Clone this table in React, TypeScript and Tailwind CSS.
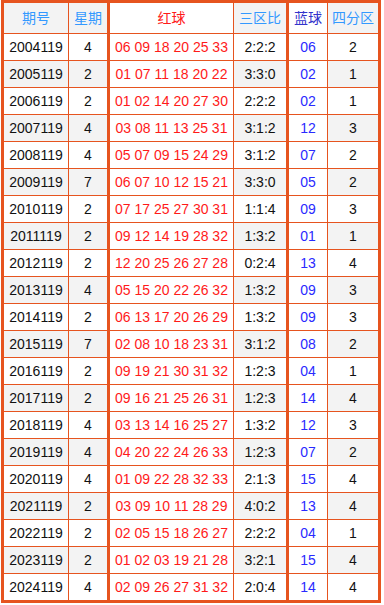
const rows: [string, string, string, string, string, string][] = [
  ["2004119", "4", "06 09 18 20 25 33", "2:2:2", "06", "2"],
  ["2005119", "2", "01 07 11 18 20 22", "3:3:0", "02", "1"],
  ["2006119", "2", "01 02 14 20 27 30", "2:2:2", "02", "1"],
  ["2007119", "4", "03 08 11 13 25 31", "3:1:2", "12", "3"],
  ["2008119", "4", "05 07 09 15 24 29", "3:1:2", "07", "2"],
  ["2009119", "7", "06 07 10 12 15 21", "3:3:0", "05", "2"],
  ["2010119", "2", "07 17 25 27 30 31", "1:1:4", "09", "3"],
  ["2011119", "2", "09 12 14 19 28 32", "1:3:2", "01", "1"],
  ["2012119", "2", "12 20 25 26 27 28", "0:2:4", "13", "4"],
  ["2013119", "4", "05 15 20 22 26 32", "1:3:2", "09", "3"],
  ["2014119", "2", "06 13 17 20 26 29", "1:3:2", "09", "3"],
  ["2015119", "7", "02 08 10 18 23 31", "3:1:2", "08", "2"],
  ["2016119", "2", "09 19 21 30 31 32", "1:2:3", "04", "1"],
  ["2017119", "2", "09 16 21 25 26 31", "1:2:3", "14", "4"],
  ["2018119", "4", "03 13 14 16 25 27", "1:3:2", "12", "3"],
  ["2019119", "4", "04 20 22 24 26 33", "1:2:3", "07", "2"],
  ["2020119", "4", "01 09 22 28 32 33", "2:1:3", "15", "4"],
  ["2021119", "2", "03 09 10 11 28 29", "4:0:2", "13", "4"],
  ["2022119", "2", "02 05 15 18 26 27", "2:2:2", "04", "1"],
  ["2023119", "2", "01 02 03 19 21 28", "3:2:1", "15", "4"],
  ["2024119", "4", "02 09 26 27 31 32", "2:0:4", "14", "4"],
];

const cell = "flex items-center justify-center";

export default function App() {
  return (
    <div className="bg-white w-[384px] h-[605px] font-['Liberation_Sans','Noto_Sans_CJK_SC',sans-serif] text-[14px]">
      <div className="ml-px w-[380px] border-[3px] border-[#e6541f]">
        <div className="flex h-[31px] border-b border-[#e6541f]">
          <div className={`${cell} w-[64px] bg-[#f3f3f3] text-[#3399ff]`}>期号</div>
          <div className={`${cell} w-[39px] border-l border-[#e6541f] bg-[#f3f3f3] text-[#3399ff]`}>星期</div>
          <div className={`${cell} w-[126px] border-l-[3px] border-[#e6541f] bg-white text-[#ff1a1a]`}>红球</div>
          <div className={`${cell} w-[53px] border-l border-[#e6541f] bg-[#f3f3f3] text-[#3399ff]`}>三区比</div>
          <div className={`${cell} w-[41px] border-l-[3px] border-[#e6541f] bg-white text-[#3333cc]`}>蓝球</div>
          <div className={`${cell} w-[51px] border-l border-[#e6541f] bg-[#f3f3f3] text-[#3399ff]`}>四分区</div>
        </div>
        {rows.map((r, i) => {
          const shade = i % 2 === 1 ? "bg-[#f3f3f3]" : "bg-white";
          const last = i === rows.length - 1;
          return (
            <div key={r[0]} className={`flex text-[#111] ${last ? "h-[26px]" : "h-[27px] border-b border-[#e6541f]"}`}>
              <div className={`${cell} w-[64px] ${shade}`}>{r[0]}</div>
              <div className={`${cell} w-[39px] border-l border-[#e6541f] ${shade}`}>{r[1]}</div>
              <div className={`${cell} w-[126px] border-l-[3px] border-[#e6541f] bg-white text-[#ff1a1a]`}>{r[2]}</div>
              <div className={`${cell} w-[53px] border-l border-[#e6541f] ${shade}`}>{r[3]}</div>
              <div className={`${cell} w-[41px] border-l-[3px] border-[#e6541f] bg-white text-[#2a2aff]`}>{r[4]}</div>
              <div className={`${cell} w-[51px] border-l border-[#e6541f] ${shade}`}>{r[5]}</div>
            </div>
          );
        })}
      </div>
    </div>
  );
}
